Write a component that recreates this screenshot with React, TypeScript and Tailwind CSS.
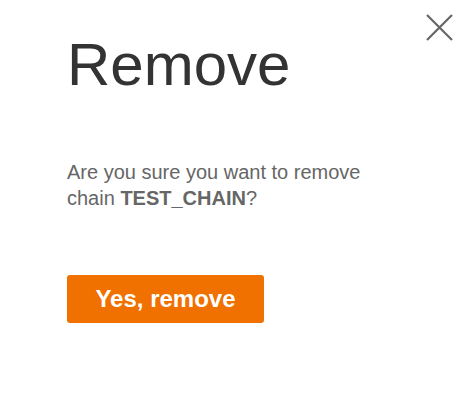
import React from "react";

// Confirmation dialog for removing a chain.
export default function App() {
  return (
    <div
      className="relative w-[471px] h-[413px] bg-white"
      style={{ fontFamily: '"Liberation Sans", Arial, sans-serif' }}
    >
      <button
        type="button"
        aria-label="Close"
        className="absolute right-[18px] top-[14px] w-[27px] h-[27px] text-[#666]"
      >
        <svg viewBox="0 0 27 27" className="w-full h-full" fill="none" stroke="currentColor" strokeWidth="2.2">
          <path d="M1 1 L26 26 M26 1 L1 26" />
        </svg>
      </button>

      <div className="flex flex-col pl-[67px] pt-[30px]">
        <h1 className="text-[60px] leading-[69px] text-[#333] font-normal">Remove</h1>
        <p className="mt-[60px] text-[20px] leading-[26px] text-[#666] w-[310px]">
          Are you sure you want to remove chain <b className="font-bold">TEST_CHAIN</b>?
        </p>
        <div className="mt-[64px]">
          <button
            type="button"
            className="w-[197px] h-[48px] rounded-[3px] bg-[#f07000] text-white text-[24px] font-bold"
          >
            Yes, remove
          </button>
        </div>
      </div>
    </div>
  );
}
